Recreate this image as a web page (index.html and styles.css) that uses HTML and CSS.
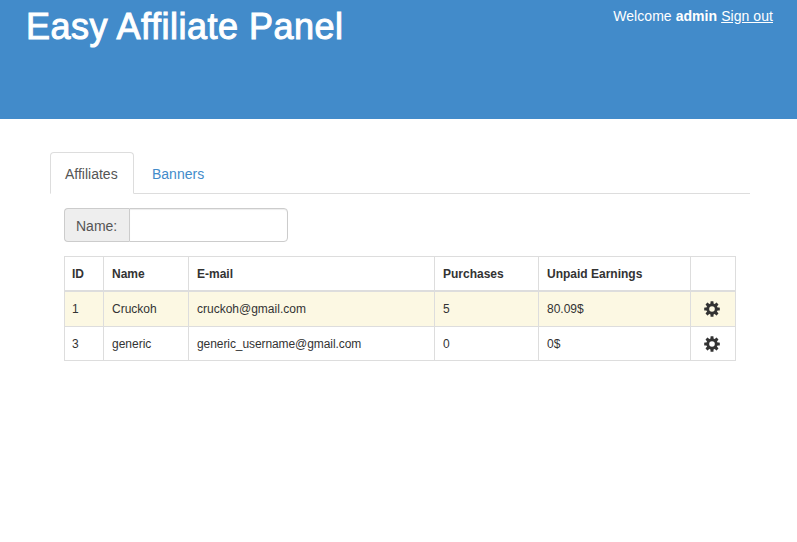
FILE: index.html
```html
<!DOCTYPE html>
<html lang="en">
<head>
<meta charset="utf-8">
<title>Easy Affiliate Panel</title>
<link rel="stylesheet" href="styles.css">
</head>
<body>
<svg class="defs" width="0" height="0">
  <symbol id="gear" viewBox="-8 -8 16 16">
    <g fill="#333">
      <rect x="-1.5" y="-7.8" width="3" height="15.6" rx=".5"/>
      <rect x="-1.5" y="-7.8" width="3" height="15.6" rx=".5" transform="rotate(45)"/>
      <rect x="-1.5" y="-7.8" width="3" height="15.6" rx=".5" transform="rotate(90)"/>
      <rect x="-1.5" y="-7.8" width="3" height="15.6" rx=".5" transform="rotate(135)"/>
      <circle r="5.7"/>
    </g>
    <circle class="hole" r="2.8"/>
  </symbol>
</svg>
<header class="header">
  <h1 class="title">Easy Affiliate Panel</h1>
  <p class="user">Welcome <b>admin</b> <a href="#">Sign out</a></p>
</header>
<main class="content">
  <nav class="tabs">
    <a class="tab active" href="#">Affiliates</a>
    <a class="tab" href="#">Banners</a>
  </nav>
  <section class="pane">
    <div class="filter">
      <label for="name">Name:</label>
      <input id="name" type="text">
    </div>
    <table class="table">
      <colgroup><col class="c-id"><col class="c-name"><col class="c-mail"><col class="c-buy"><col class="c-earn"><col class="c-act"></colgroup>
      <thead>
        <tr><th>ID</th><th>Name</th><th>E-mail</th><th>Purchases</th><th>Unpaid Earnings</th><th></th></tr>
      </thead>
      <tbody>
        <tr class="warning"><td>1</td><td>Cruckoh</td><td>cruckoh@gmail.com</td><td>5</td><td>80.09$</td><td class="action"><svg class="gear"><use href="#gear"/></svg></td></tr>
        <tr><td>3</td><td>generic</td><td class="long">generic_username@gmail.com</td><td>0</td><td>0$</td><td class="action"><svg class="gear"><use href="#gear"/></svg></td></tr>
      </tbody>
    </table>
  </section>
</main>
</body>
</html>
```
FILE: styles.css
```css
* { box-sizing: border-box; }
body {
  margin: 0;
  background: #fff;
  color: #333;
  font: 14px/20px "Liberation Sans", Arial, sans-serif;
}
.defs { display: block; }
.header {
  display: flex;
  justify-content: space-between;
  height: 119px;
  padding: 6px 24px 0 26px;
  background: #428bca;
  color: #fff;
}
.title {
  margin: 1px 0 0;
  font-size: 36px;
  line-height: 40px;
  font-weight: 400;
  letter-spacing: .5px;
  -webkit-text-stroke: 1px #fff;
}
.user { margin: 0; letter-spacing: .06px; }
.user a { color: #fff; }
.content { padding: 33px 47px 0 50px; }
.tabs {
  display: flex;
  gap: 3px;
  height: 42px;
  border-bottom: 1px solid #ddd;
}
.tab {
  height: 42px;
  padding: 11px 14px 0;
  border: 1px solid transparent;
  border-radius: 4px 4px 0 0;
  color: #428bca;
  text-decoration: none;
}
.tab.active {
  width: 84px;
  border-color: #ddd #ddd #fff;
  background: #fff;
  color: #555;
}
.pane { padding: 14px 14px 0; }
.filter { display: flex; width: 224px; height: 34px; }
.filter label {
  width: 65px;
  padding: 7px 0 0 11px;
  border: 1px solid #ccc;
  border-right: 0;
  border-radius: 4px 0 0 4px;
  background: #eee;
  color: #555;
}
.filter input {
  flex: 1;
  min-width: 0;
  border: 1px solid #ccc;
  border-radius: 0 4px 4px 0;
  box-shadow: inset 0 1px 1px rgba(0, 0, 0, .075);
}
.table {
  --hole: #fff;
  width: 672px;
  margin-top: 14px;
  table-layout: fixed;
  border: 0 solid #ddd;
  border-width: 1px 0 0 1px;
  border-spacing: 0;
  font-size: 12px;
  line-height: 17px;
}
.c-id { width: 39px; }
.c-name { width: 85px; }
.c-mail { width: 246px; }
.c-buy { width: 104px; }
.c-earn { width: 152px; }
.c-act { width: 45px; }
.table th, .table td {
  height: 34px;
  padding: 1px 7px 0 8px;
  border: 0 solid #ddd;
  border-width: 0 1px 1px 0;
  text-align: left;
  white-space: nowrap;
}
.table th { height: 35px; padding-top: 2px; border-bottom-width: 2px; }
.table th:first-child, .table td:first-child { padding-left: 7px; }
.table .warning { --hole: #fcf8e3; }
.table .warning td { height: 35px; padding-top: 0; background: #fcf8e3; }
.table .long { letter-spacing: -.08px; }
.table .action { padding: 0 0 0 13px; }
.gear { display: block; width: 16px; height: 16px; }
.hole { fill: var(--hole); }
```
